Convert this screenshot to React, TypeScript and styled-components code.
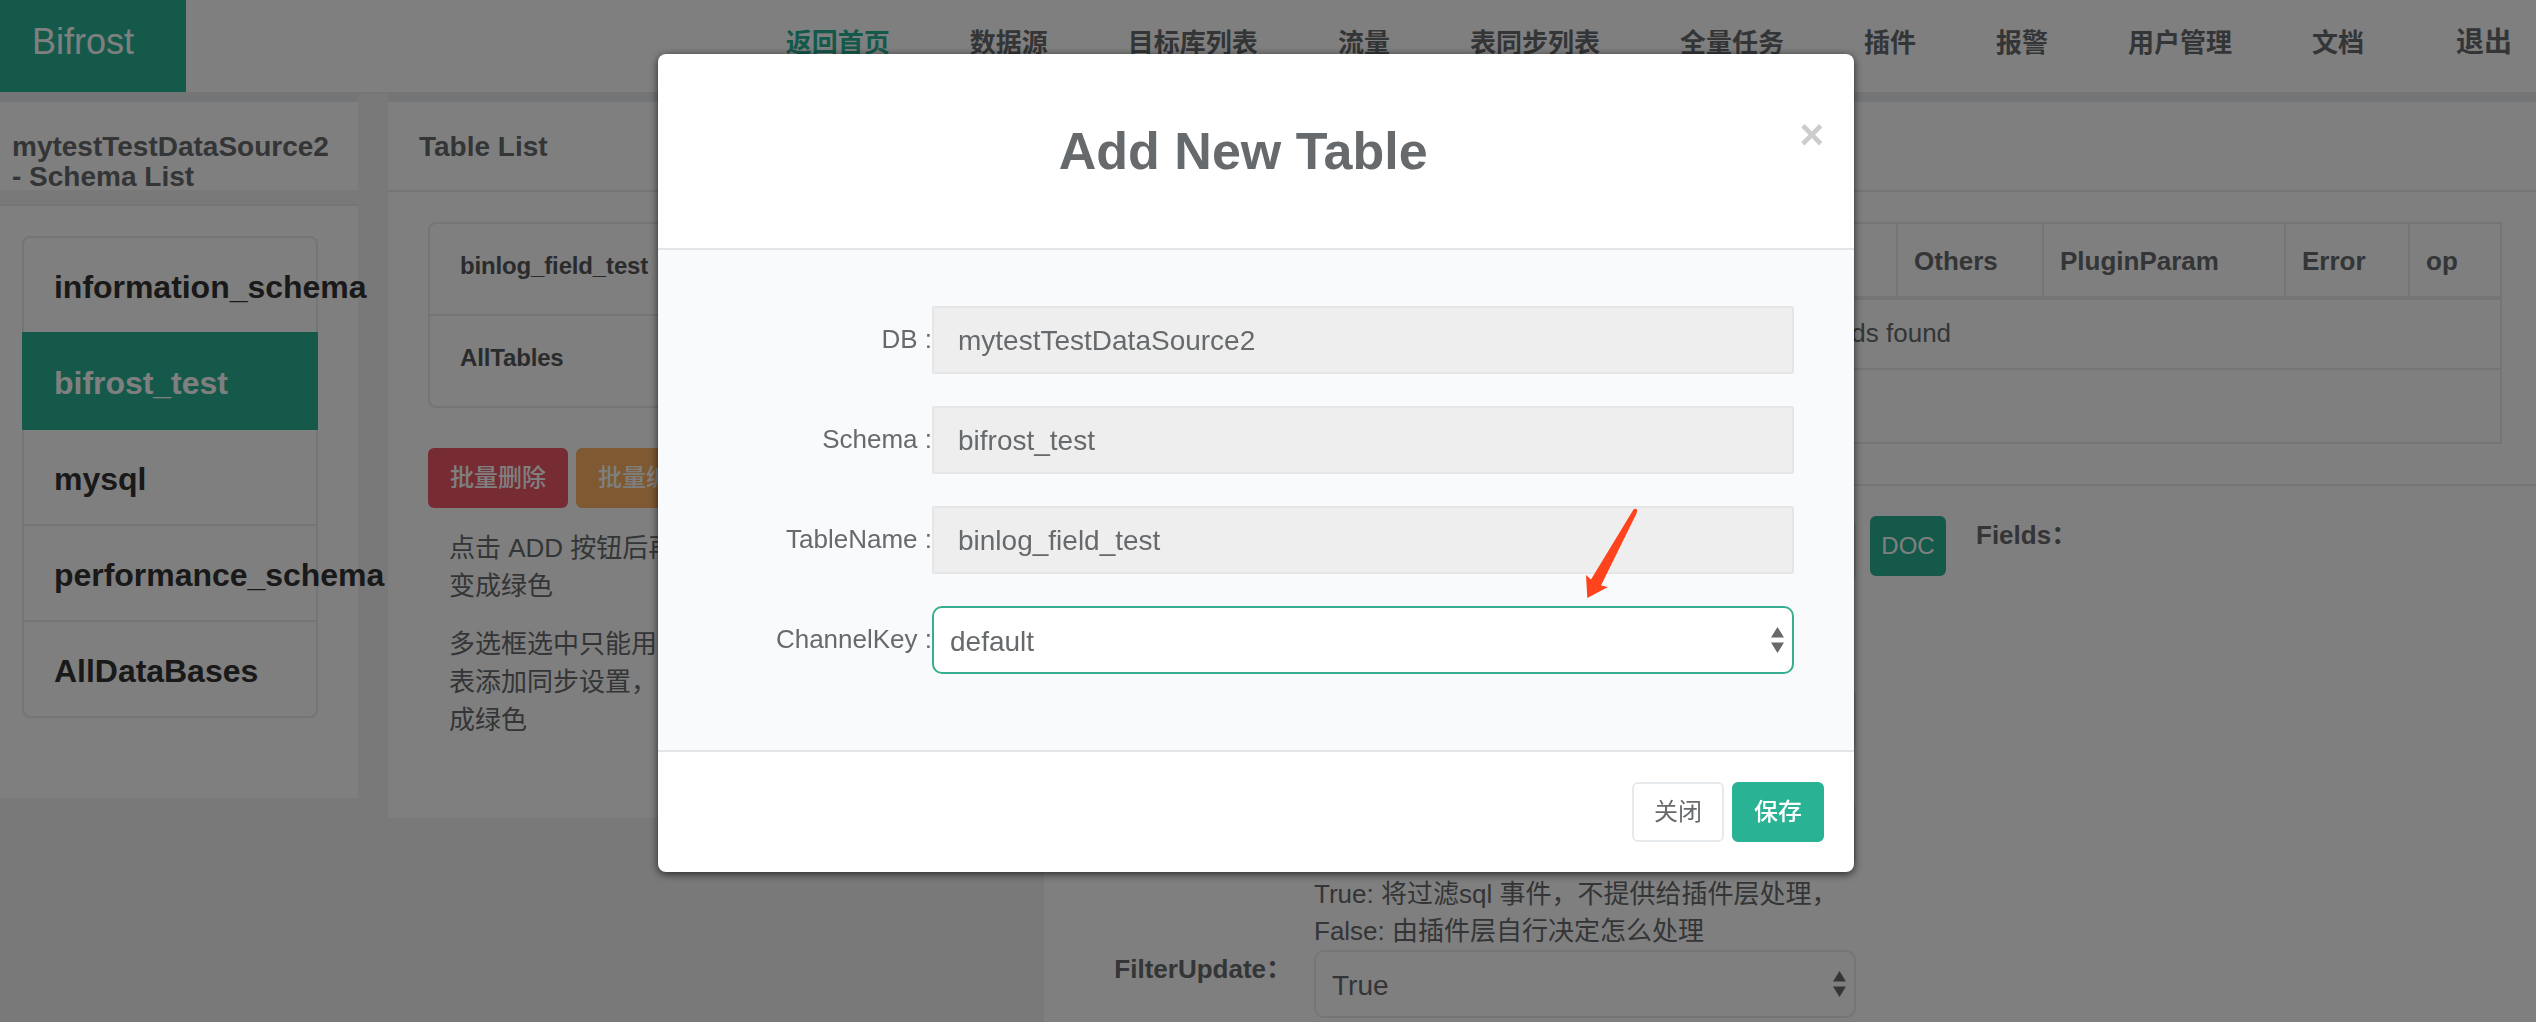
import React from "react";
import styled, { createGlobalStyle, css } from "styled-components";

const C = {
  green: "#29b294",
  red: "#ee5868",
  orange: "#feb263",
  text: "#676a6c",
  line: "#e7eaec",
  page: "#f3f3f4",
};

const GlobalStyle = createGlobalStyle`
  * { box-sizing: border-box; }
  html, body { margin: 0; padding: 0; }
  body {
    width: 2536px;
    height: 1022px;
    overflow: hidden;
    background: ${C.page};
    color: ${C.text};
    font-family: "Liberation Sans", "Noto Sans CJK SC", sans-serif;
    font-size: 26px;
    line-height: 37px;
  }
  h1, h5, p { margin: 0; }
`;

const Page = styled.div`
  isolation: isolate;
  height: 1022px;
  overflow: hidden;
`;

/* ---------- top bar ---------- */
const TopBar = styled.header`
  display: flex;
  justify-content: space-between;
  height: 94px;
  background: #fff;
  border-bottom: 2px solid ${C.line};
`;

const Logo = styled.div`
  width: 186px;
  height: 92px;
  padding-left: 32px;
  background: ${C.green};
  color: #fff;
  font-size: 36px;
  line-height: 83px;
`;

const Nav = styled.nav`
  display: flex;
  gap: 80px;
  padding-right: 24px;
  font-weight: 600;
  line-height: 86px;
`;

const NavLink = styled.a<{ $active?: boolean; $exit?: boolean }>`
  color: ${(p) => (p.$active ? C.green : C.text)};
  ${(p) =>
    p.$exit &&
    css`
      margin-left: 12px;
      font-size: 28px;
    `}
`;

/* ---------- panels ---------- */
const Columns = styled.main`
  display: flex;
  align-items: flex-start;
`;

const Column = styled.section<{ $width: number; $gap?: number }>`
  flex: none;
  width: ${(p) => p.$width}px;
  margin-right: ${(p) => p.$gap ?? 0}px;
`;

const PanelTitle = styled.h5<{ $inset: number }>`
  height: 96px;
  padding: 30px 0 0 ${(p) => p.$inset}px;
  background: #fff;
  border-top: 8px solid ${C.line};
  font-size: 28px;
  font-weight: 700;
  line-height: 30px;
`;

const PanelBody = styled.div<{ $height: number; $pad: string; $offset?: number }>`
  height: ${(p) => p.$height}px;
  margin-top: ${(p) => p.$offset ?? 0}px;
  padding: ${(p) => p.$pad};
  background: #fff;
  border-top: 2px solid ${C.line};
`;

const List = styled.ul`
  margin: 0;
  padding: 0;
  list-style: none;
`;

const ListItem = styled.li<{ $small?: boolean; $active?: boolean }>`
  position: relative;
  height: ${(p) => (p.$small ? 94 : 98)}px;
  margin-bottom: -2px;
  padding: ${(p) => (p.$small ? "24px 30px 0" : "32px 30px 0")};
  border: 2px solid ${C.line};
  color: ${(p) => (p.$small ? "#555759" : "#333")};
  font-size: ${(p) => (p.$small ? 24 : 32)}px;
  font-weight: 700;
  letter-spacing: ${(p) => (p.$small ? "-0.15px" : "-0.03px")};
  line-height: 35px;
  white-space: nowrap;
  &:first-child { border-radius: 8px 8px 0 0; }
  &:last-child { border-radius: 0 0 8px 8px; }
  ${(p) =>
    p.$active &&
    css`
      z-index: 1;
      background: ${C.green};
      border-color: ${C.green};
      color: #fff;
    `}
`;

const ButtonRow = styled.div`
  display: flex;
  gap: 8px;
  margin-top: 42px;
`;

const Button = styled.button<{ $bg: string; $width: number; $outline?: boolean }>`
  flex: none;
  width: ${(p) => p.$width}px;
  height: 60px;
  padding: 0;
  border: 2px solid ${(p) => (p.$outline ? C.line : p.$bg)};
  border-radius: 6px;
  background: ${(p) => p.$bg};
  color: ${(p) => (p.$outline ? C.text : "#fff")};
  font-family: inherit;
  font-size: 24px;
  font-weight: ${(p) => (p.$outline ? 400 : 500)};
  line-height: 56px;
`;

const Notes = styled.div`
  display: grid;
  gap: 20px;
  margin-top: 21px;
  padding-left: 21px;
  line-height: 38px;
`;

/* ---------- sync table ---------- */
const GridWrap = styled.div`
  padding: 0 34px 0 44px;
`;

const Grid = styled.div`
  border: 2px solid ${C.line};
`;

const HeadRow = styled.div`
  display: grid;
  grid-template-columns: 1fr 146px 242px 124px 92px;
  height: 76px;
  border-bottom: 4px solid ${C.line};
  font-weight: 700;
`;

const HeadCell = styled.div<{ $first?: boolean }>`
  padding: 19px 0 0 16px;
  ${(p) => !p.$first && `border-left: 2px solid ${C.line};`}
`;

const BodyRow = styled.div<{ $last?: boolean }>`
  height: ${(p) => (p.$last ? 72 : 70)}px;
  padding-top: 15px;
  border-bottom: ${(p) => (p.$last ? 0 : 2)}px solid ${C.line};
  text-align: center;
`;

/* ---------- settings form ---------- */
const Settings = styled.div`
  display: flex;
  align-items: flex-start;
  margin-top: 40px;
  border-top: 2px solid ${C.line};
  padding-top: 30px;
`;

const Fields = styled.div`
  width: 812px;
`;

const FieldRow = styled.div<{ $top?: number }>`
  display: grid;
  grid-template-columns: 248px 542px;
  column-gap: 22px;
  margin-top: ${(p) => p.$top ?? 0}px;
`;

const FieldName = styled.div`
  align-self: end;
  padding-bottom: 30px;
  text-align: right;
  font-weight: 700;
  white-space: nowrap;
`;

const DocCell = styled.div`
  margin-left: 14px;
`;

const FieldsHeading = styled.div`
  margin: 1px 0 0 30px;
  font-weight: 700;
`;

/* ---------- select ---------- */
const SelectBox = styled.div<{ $focus?: boolean }>`
  display: flex;
  align-items: center;
  justify-content: space-between;
  height: 68px;
  padding: 2px 8px 0 16px;
  border: 2px solid ${(p) => (p.$focus ? "#37ae91" : C.line)};
  border-radius: 10px;
  background: #fff;
  font-size: 28px;
`;

const Stepper = styled.svg`
  width: 13px;
  height: 26px;
  margin-bottom: 2px;
  fill: ${C.text};
`;

function Select({ value, focus }: { value?: string; focus?: boolean }) {
  return (
    <SelectBox $focus={focus}>
      <span>{value}</span>
      <Stepper viewBox="0 0 13 26">
        <path d="M6.5 0 13 10.5H0Z" />
        <path d="M0 15.5h13L6.5 26Z" />
      </Stepper>
    </SelectBox>
  );
}

/* ---------- modal ---------- */
const Backdrop = styled.div`
  position: fixed;
  inset: 0;
  background: rgba(0, 0, 0, 0.5);
`;

const Dialog = styled.div`
  position: absolute;
  top: 54px;
  left: 658px;
  width: 1196px;
  height: 818px;
  border-radius: 8px;
  background: #fff;
  box-shadow: 0 2px 9px rgba(0, 0, 0, 0.7);
`;

const DialogHead = styled.div`
  display: flex;
  height: 196px;
  padding: 60px 30px 0;
  border-bottom: 2px solid #e5e5e5;
`;

const DialogTitle = styled.h1`
  flex: 1;
  padding: 9px 1px 0 0;
  text-align: center;
  font-size: 52px;
  font-weight: 700;
  line-height: 57px;
`;

const Close = styled.button`
  height: 42px;
  padding: 0;
  border: 0;
  background: none;
  color: #ccc;
  font-family: inherit;
  font-size: 42px;
  font-weight: 700;
  line-height: 42px;
`;

const DialogBody = styled.div`
  display: grid;
  gap: 32px;
  align-content: start;
  height: 502px;
  padding: 56px 60px 0;
  background: #f8fafc;
  border-bottom: 2px solid #e3e5e6;
`;

const FormRow = styled.label`
  display: grid;
  grid-template-columns: 214px 862px;
`;

const Label = styled.span`
  padding-top: 15px;
  text-align: right;
`;

const ReadOnly = styled.div`
  height: 68px;
  padding: 14px 24px 0;
  border: 2px solid #e5e6e7;
  border-radius: 2px;
  background: #eee;
  font-size: 28px;
`;

const DialogFoot = styled.div`
  display: flex;
  justify-content: flex-end;
  gap: 8px;
  padding: 30px;
`;

const Pointer = styled.svg`
  position: absolute;
  top: 508px;
  left: 1586px;
  width: 52px;
  height: 91px;
  fill: #ff431c;
`;

const NAV = ["返回首页", "数据源", "目标库列表", "流量", "表同步列表", "全量任务", "插件", "报警", "用户管理", "文档"];
const SCHEMAS = ["information_schema", "bifrost_test", "mysql", "performance_schema", "AllDataBases"];
const TABLES = ["binlog_field_test", "AllTables"];
const READONLY = [
  ["DB", "mytestTestDataSource2"],
  ["Schema", "bifrost_test"],
  ["TableName", "binlog_field_test"],
];
const EMPTY_ROW_OFFSETS = [0, 102, 46];

export default function App() {
  return (
    <>
      <GlobalStyle />
      <Page>
        <TopBar>
          <Logo>Bifrost</Logo>
          <Nav>
            {NAV.map((n, i) => (
              <NavLink key={n} $active={i === 0}>{n}</NavLink>
            ))}
            <NavLink $exit>退出</NavLink>
          </Nav>
        </TopBar>

        <Columns>
          <Column $width={358} $gap={30}>
            <PanelTitle $inset={12}>
              mytestTestDataSource2
              <br />- Schema List
            </PanelTitle>
            <PanelBody $height={594} $pad="30px 40px 0 22px" $offset={14}>
              <List>
                {SCHEMAS.map((s) => (
                  <ListItem key={s} $active={s === "bifrost_test"}>{s}</ListItem>
                ))}
              </List>
            </PanelBody>
          </Column>

          <Column $width={626} $gap={30}>
            <PanelTitle $inset={31}>Table List</PanelTitle>
            <PanelBody $height={628} $pad="30px 40px 0">
              <List>
                {TABLES.map((t) => (
                  <ListItem key={t} $small>{t}</ListItem>
                ))}
              </List>
              <ButtonRow>
                <Button $bg={C.red} $width={140}>批量删除</Button>
                <Button $bg={C.orange} $width={140}>批量编辑</Button>
              </ButtonRow>
              <Notes>
                <p>
                  点击 ADD 按钮后再
                  <br />
                  变成绿色
                </p>
                <p>
                  多选框选中只能用
                  <br />
                  表添加同步设置，
                  <br />
                  成绿色
                </p>
              </Notes>
            </PanelBody>
          </Column>

          <Column $width={1492}>
            <PanelTitle $inset={30} />
            <PanelBody $height={840} $pad="30px 0 0">
              <GridWrap>
                <Grid>
                  <HeadRow>
                    <HeadCell $first />
                    <HeadCell>Others</HeadCell>
                    <HeadCell>PluginParam</HeadCell>
                    <HeadCell>Error</HeadCell>
                    <HeadCell>op</HeadCell>
                  </HeadRow>
                  <BodyRow>No matching records found</BodyRow>
                  <BodyRow $last />
                </Grid>
              </GridWrap>
              <Settings>
                <Fields>
                  {EMPTY_ROW_OFFSETS.map((top) => (
                    <FieldRow key={top} $top={top}>
                      <FieldName />
                      <Select />
                    </FieldRow>
                  ))}
                  <FieldRow $top={8}>
                    <FieldName>FilterUpdate：</FieldName>
                    <div>
                      <p>
                        True: 将过滤sql 事件，不提供给插件层处理，
                        <br />
                        False: 由插件层自行决定怎么处理
                      </p>
                      <Select value="True" />
                    </div>
                  </FieldRow>
                </Fields>
                <DocCell>
                  <Button $bg={C.green} $width={76}>DOC</Button>
                </DocCell>
                <FieldsHeading>Fields：</FieldsHeading>
              </Settings>
            </PanelBody>
          </Column>
        </Columns>
      </Page>

      <Backdrop>
        <Dialog>
          <DialogHead>
            <DialogTitle>Add New Table</DialogTitle>
            <Close>×</Close>
          </DialogHead>
          <DialogBody>
            {READONLY.map(([k, v]) => (
              <FormRow key={k}>
                <Label>{k} :</Label>
                <ReadOnly>{v}</ReadOnly>
              </FormRow>
            ))}
            <FormRow>
              <Label>ChannelKey :</Label>
              <Select value="default" focus />
            </FormRow>
          </DialogBody>
          <DialogFoot>
            <Button $bg="#fff" $width={92} $outline>关闭</Button>
            <Button $bg={C.green} $width={92}>保存</Button>
          </DialogFoot>
        </Dialog>
        <Pointer viewBox="0 0 52 91">
          <path d="M47.5 1.4Q49.5 0 51.3 2L50.5 5.5 15 77.5 22 79 1.3 90 0 67 5 71.5Z" />
        </Pointer>
      </Backdrop>
    </>
  );
}
